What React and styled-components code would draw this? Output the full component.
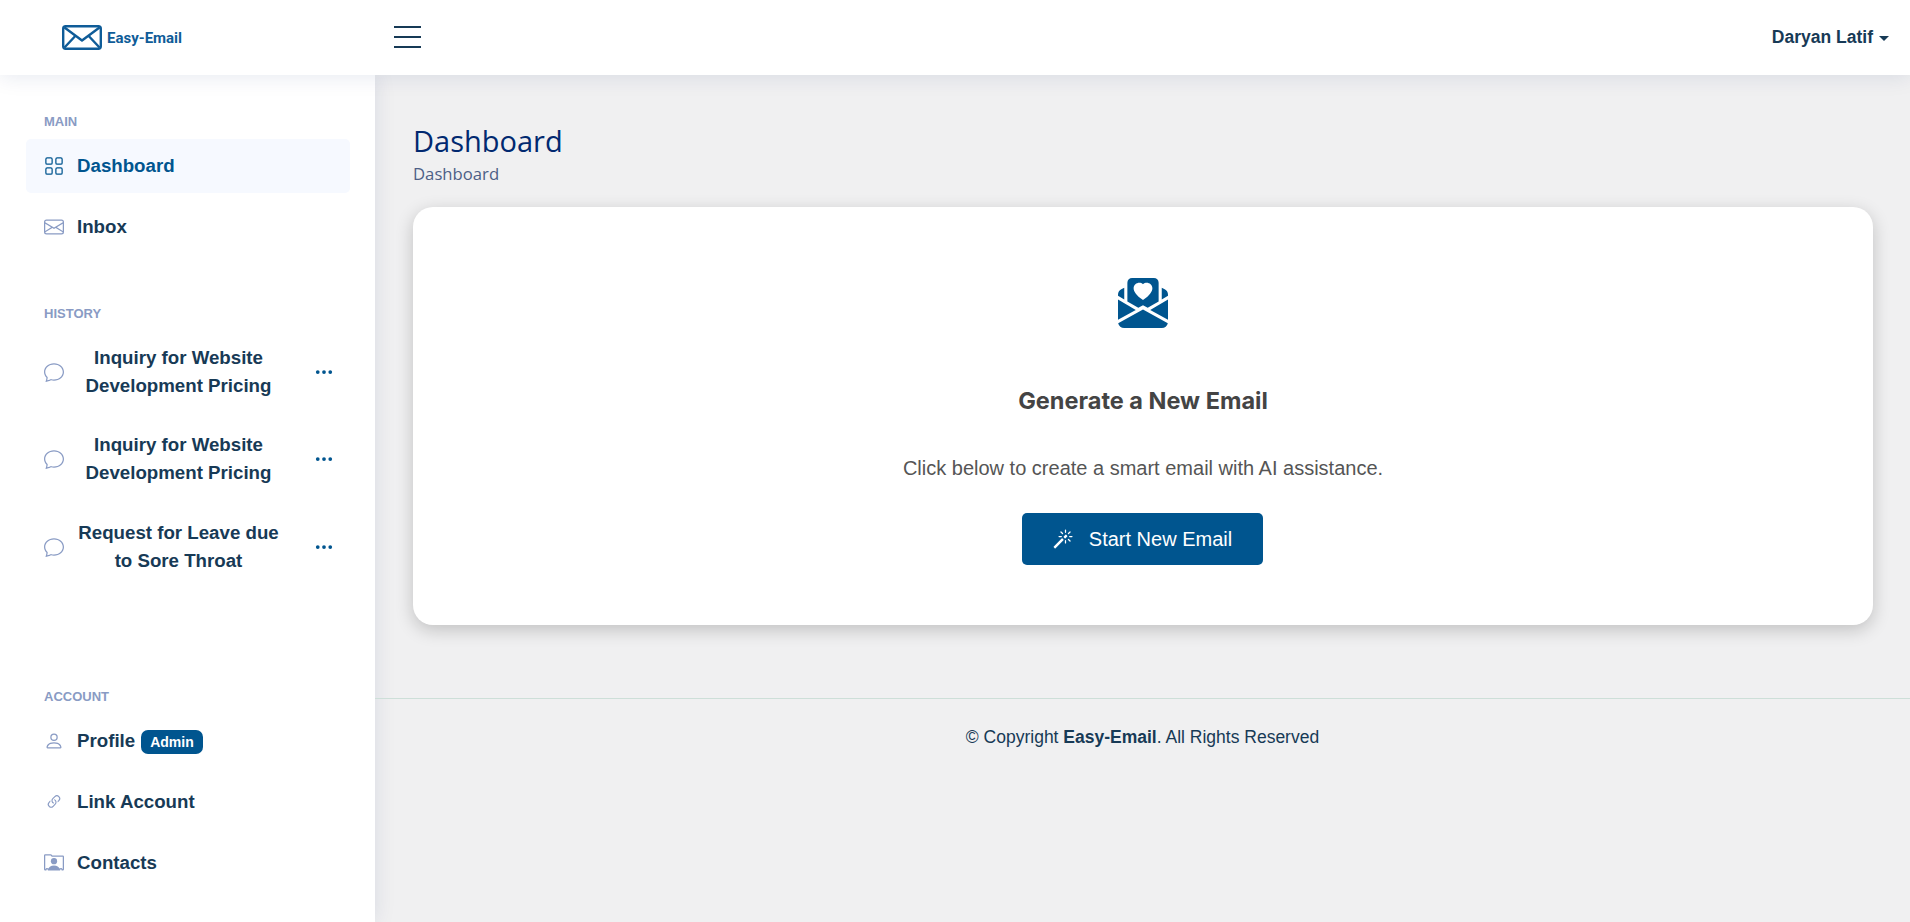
import React from "react";
import styled, { createGlobalStyle } from "styled-components";
import {
  BsGrid,
  BsEnvelope,
  BsChat,
  BsThreeDots,
  BsPerson,
  BsLink45Deg,
  BsPersonRolodex,
  BsMagic,
  BsEnvelopePaperHeartFill,
} from "react-icons/bs";

const Global = createGlobalStyle`
  html, body { margin: 0; padding: 0; height: 100%; overflow: hidden; }
  body { font-family: "Liberation Sans", Arial, sans-serif; background: #f0f0f1; color: #173a56; }
  * { box-sizing: border-box; }
`;

const Page = styled.div`
  display: flex;
  flex-direction: column;
  height: 922px;
`;

const Header = styled.header`
  flex: 0 0 75px;
  height: 75px;
  display: flex;
  align-items: center;
  background: #fff;
  box-shadow: 0 2px 20px rgba(1, 41, 112, 0.1);
  position: relative;
  z-index: 2;
`;

const Brand = styled.div`
  width: 394px;
  padding-left: 62px;
  display: flex;
  align-items: center;
  gap: 5px;
`;

const BrandName = styled.span`
  font-family: Roboto, sans-serif;
  font-size: 15px;
  font-weight: 700;
  color: #0f5c98;
`;

const Burger = styled.div`
  width: 27px;
  height: 22px;
  margin-bottom: 1px;
  display: flex;
  flex-direction: column;
  justify-content: space-between;
  & > span { display: block; height: 2px; background: #173a56; }
`;

const UserMenu = styled.div`
  margin-left: auto;
  padding-right: 21px;
  display: flex;
  align-items: center;
  gap: 6px;
  font-size: 17.5px;
  font-weight: 700;
  color: #173a56;
`;

const Caret = styled.span`
  width: 0;
  height: 0;
  border-left: 5.5px solid transparent;
  border-right: 5.5px solid transparent;
  border-top: 5.5px solid #173a56;
  margin-top: 2px;
`;

const Body = styled.div`
  flex: 1;
  display: flex;
  min-height: 0;
`;

const Sidebar = styled.aside`
  flex: 0 0 375px;
  width: 375px;
  background: #fff;
  padding: 39px 25px 0 26px;
  box-shadow: 0 0 20px rgba(1, 41, 112, 0.1);
  display: flex;
  flex-direction: column;
`;

const SectionLabel = styled.div`
  font-size: 13px;
  line-height: 16px;
  font-weight: 700;
  color: #899bc4;
  padding-left: 18px;
  text-transform: uppercase;
  margin-top: ${(p) => p.$top || 0}px;
  margin-bottom: ${(p) => p.$bottom || 0}px;
`;

const NavItem = styled.div`
  height: 54px;
  margin-top: ${(p) => (p.$first ? 9 : 7)}px;
  display: flex;
  align-items: center;
  padding-left: 18px;
  gap: 13px;
  font-size: 18.7px;
  font-weight: 700;
  color: ${(p) => (p.$active ? "#00558f" : "#173a56")};
  background: ${(p) => (p.$active ? "#f6f9ff" : "transparent")};
  border-radius: 5px;
`;

const NavIcon = styled.span`
  width: 20px;
  height: 20px;
  flex: 0 0 20px;
  display: flex;
  align-items: center;
  justify-content: center;
  color: ${(p) => (p.$active ? "#00558f" : "#899bc4")};
  font-size: ${(p) => p.$size || 20}px;
`;

const HistoryItem = styled.div`
  height: 87.5px;
  display: flex;
  align-items: center;
  padding: 0 16px 0 18px;
  font-size: 18.7px;
  line-height: 28px;
  font-weight: 700;
  color: #173a56;
`;

const HistoryText = styled.div`
  flex: 1;
  text-align: center;
  padding: 0 26px 0 5px;
`;

const Dots = styled.span`
  flex: 0 0 20px;
  display: flex;
  justify-content: center;
  color: #00558f;
  font-size: 20px;
`;

const Badge = styled.span`
  display: inline-block;
  margin-left: -7px;
  padding: 0 9px;
  height: 24px;
  line-height: 25px;
  border-radius: 7px;
  background: #00558f;
  color: #fff;
  font-size: 14px;
  font-weight: 700;
  position: relative;
  top: 1px;
`;

const Main = styled.main`
  flex: 1;
  min-width: 0;
  display: flex;
  flex-direction: column;
`;

const Content = styled.div`
  padding: 48px 37px 0 38px;
`;

const Title = styled.h1`
  margin: 0;
  font-family: "Open Sans", sans-serif;
  font-size: 29px;
  line-height: 36px;
  font-weight: 500;
  color: #012970;
`;

const Crumb = styled.div`
  font-family: "Open Sans", sans-serif;
  font-size: 16.7px;
  line-height: 22px;
  color: #4d5f86;
  margin-top: 4px;
`;

const Card = styled.section`
  margin-top: 22px;
  height: 418px;
  background: #fff;
  border-radius: 20px;
  box-shadow: 0 5px 18px rgba(0, 0, 0, 0.2);
  display: flex;
  flex-direction: column;
  align-items: center;
  padding-top: 71px;
`;

const HeroIcon = styled.div`
  color: #00558f;
  font-size: 50px;
  line-height: 50px;
  height: 50px;
  display: flex;
`;

const CardTitle = styled.h2`
  margin: 59px 0 0;
  font-family: Inter, sans-serif;
  font-size: 23.5px;
  line-height: 28px;
  font-weight: 700;
  color: #444444;
`;

const CardText = styled.p`
  margin: 40px 0 0;
  font-size: 20px;
  line-height: 26px;
  color: #555555;
`;

const Button = styled.button`
  margin: 32px 1px 0 0;
  width: 241px;
  height: 52px;
  border: 0;
  border-radius: 5px;
  background: #00558f;
  color: #fff;
  font-family: inherit;
  font-size: 20px;
  display: flex;
  align-items: center;
  justify-content: center;
  gap: 16px;
`;

const Footer = styled.footer`
  margin-top: 73px;
  border-top: 1px solid #cddfd8;
  padding-top: 28px;
  text-align: center;
  font-size: 17.5px;
  line-height: 20px;
  color: #173a56;
`;

const LogoMark = () => (
  <svg width="40" height="25" viewBox="0 0 40 25" fill="none" stroke="#0f5c98" strokeWidth="2.4" strokeLinejoin="round">
    <rect x="1.2" y="1.2" width="37.6" height="22.6" rx="2.5" />
    <path d="M2.5 2.5 L20 15.5 L37.5 2.5" />
    <path d="M2.5 22.5 L13.5 10.8 M37.5 22.5 L26.5 10.8" />
  </svg>
);

const history = [
  "Inquiry for Website Development Pricing",
  "Inquiry for Website Development Pricing",
  "Request for Leave due to Sore Throat",
];

export default function App() {
  return (
    <Page>
      <Global />
      <Header>
        <Brand>
          <LogoMark />
          <BrandName>Easy-Email</BrandName>
        </Brand>
        <Burger>
          <span />
          <span />
          <span />
        </Burger>
        <UserMenu>
          Daryan Latif
          <Caret />
        </UserMenu>
      </Header>
      <Body>
        <Sidebar>
          <SectionLabel>Main</SectionLabel>
          <NavItem $active $first>
            <NavIcon $active><BsGrid /></NavIcon>
            Dashboard
          </NavItem>
          <NavItem>
            <NavIcon><BsEnvelope /></NavIcon>
            Inbox
          </NavItem>
          <SectionLabel $top={52} $bottom={6}>History</SectionLabel>
          {history.map((t, i) => (
            <HistoryItem key={i}>
              <NavIcon><BsChat /></NavIcon>
              <HistoryText>{t}</HistoryText>
              <Dots><BsThreeDots /></Dots>
            </HistoryItem>
          ))}
          <SectionLabel $top={98}>Account</SectionLabel>
          <NavItem $first>
            <NavIcon><BsPerson /></NavIcon>
            Profile
            <Badge>Admin</Badge>
          </NavItem>
          <NavItem>
            <NavIcon $size={18}><BsLink45Deg /></NavIcon>
            Link Account
          </NavItem>
          <NavItem>
            <NavIcon><BsPersonRolodex /></NavIcon>
            Contacts
          </NavItem>
        </Sidebar>
        <Main>
          <Content>
            <Title>Dashboard</Title>
            <Crumb>Dashboard</Crumb>
            <Card>
              <HeroIcon><BsEnvelopePaperHeartFill /></HeroIcon>
              <CardTitle>Generate a New Email</CardTitle>
              <CardText>Click below to create a smart email with AI assistance.</CardText>
              <Button>
                <BsMagic size={20} />
                Start New Email
              </Button>
            </Card>
          </Content>
          <Footer>
            © Copyright <strong>Easy-Email</strong>. All Rights Reserved
          </Footer>
        </Main>
      </Body>
    </Page>
  );
}
